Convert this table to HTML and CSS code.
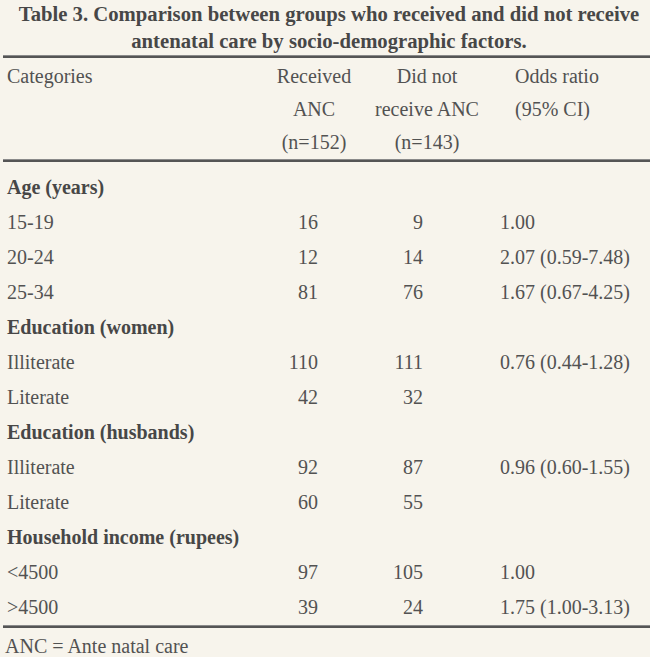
FILE: index.html
```html
<!DOCTYPE html>
<html>
<head>
<meta charset="utf-8">
<link rel="stylesheet" href="styles.css">
</head>
<body>
<div class="page">
  <div class="title">Table 3. Comparison between groups who received and did not receive<br>antenatal care by socio-demographic factors.</div>
  <div class="rule"></div>
  <div class="grid head">
    <div class="c1">Categories</div>
    <div class="c2">Received<br>ANC<br>(n=152)</div>
    <div class="c3">Did not<br>receive ANC<br>(n=143)</div>
    <div class="c4">Odds ratio<br>(95% CI)</div>
  </div>
  <div class="rule"></div>
  <div class="grid body">
    <div class="c1 group">Age (years)</div><div></div><div></div><div></div>
    <div class="c1">15-19</div><div class="n2">16</div><div class="n3">9</div><div class="or">1.00</div>
    <div class="c1">20-24</div><div class="n2">12</div><div class="n3">14</div><div class="or">2.07 (0.59-7.48)</div>
    <div class="c1">25-34</div><div class="n2">81</div><div class="n3">76</div><div class="or">1.67 (0.67-4.25)</div>
    <div class="c1 group">Education (women)</div><div></div><div></div><div></div>
    <div class="c1">Illiterate</div><div class="n2">110</div><div class="n3">111</div><div class="or">0.76 (0.44-1.28)</div>
    <div class="c1">Literate</div><div class="n2">42</div><div class="n3">32</div><div class="or"></div>
    <div class="c1 group">Education (husbands)</div><div></div><div></div><div></div>
    <div class="c1">Illiterate</div><div class="n2">92</div><div class="n3">87</div><div class="or">0.96 (0.60-1.55)</div>
    <div class="c1">Literate</div><div class="n2">60</div><div class="n3">55</div><div class="or"></div>
    <div class="c1 group">Household income (rupees)</div><div></div><div></div><div></div>
    <div class="c1">&lt;4500</div><div class="n2">97</div><div class="n3">105</div><div class="or">1.00</div>
    <div class="c1">&gt;4500</div><div class="n2">39</div><div class="n3">24</div><div class="or">1.75 (1.00-3.13)</div>
  </div>
  <div class="rule"></div>
  <div class="foot">ANC = Ante natal care</div>
</div>
</body>
</html>
```
FILE: styles.css
```css
html, body {
  margin: 0;
  padding: 0;
  background: #f7f4ec;
}
.page {
  width: 650px;
  height: 657px;
  overflow: hidden;
  font-family: "Liberation Serif", "Times New Roman", serif;
  font-size: 20px;
  color: #525252;
  background: #f7f4ec;
}
.title {
  font-weight: bold;
  font-size: 20.7px;
  text-align: center;
  line-height: 27px;
  padding: 1px 0 0 8px;
  color: #474747;
}
.rule {
  height: 3px;
  margin: 0 0 0 3px;
  background: #555;
  border-top: 1px solid #8a8a8a;
  box-sizing: border-box;
}
.grid {
  display: grid;
  grid-template-columns: 264px 100px 126px 1fr;
}
.head {
  line-height: 33px;
  padding-top: 2px;
}
.head .c2, .head .c3 {
  text-align: center;
}
.head .c4 {
  padding-left: 25px;
}
.c1 {
  padding-left: 7px;
}
.body {
  grid-auto-rows: 35px;
  line-height: 35px;
  padding-top: 8px;
}
.group {
  font-weight: bold;
  color: #474747;
}
.n2 {
  text-align: right;
  padding-right: 46px;
}
.n3 {
  text-align: right;
  padding-right: 67px;
}
.or {
  padding-left: 10px;
}
.foot {
  padding-left: 5px;
  line-height: 30px;
  padding-top: 3px;
}
```
